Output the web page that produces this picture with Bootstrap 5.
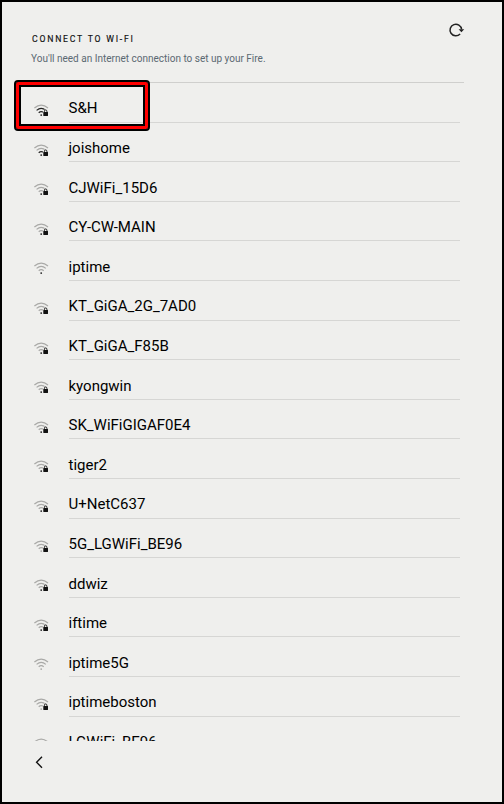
<!DOCTYPE html>
<html lang="en">
<head>
<meta charset="utf-8">
<meta name="viewport" content="width=device-width, initial-scale=1">
<title>Connect to Wi-Fi</title>
<link href="https://cdn.jsdelivr.net/npm/bootstrap@5.3.0/dist/css/bootstrap.min.css" rel="stylesheet">
<style>
body{font-family:Roboto,"Liberation Sans",sans-serif;background:#efefed}
.screen{width:504px;height:804px;border:2px solid #000;background:#efefed}
.head{height:81px;padding-top:20px;margin:0 38px 0 29px;border-bottom:1px solid #cfcfcd}
.title{font-size:8.7px;line-height:12px;letter-spacing:1.77px;color:#111;margin:11px 0 0 1px;-webkit-text-stroke:.15px #111}
.hint{font-size:10px;line-height:14px;color:#5b6972;margin-top:7px}
.networks{height:658px}
.network{height:39.6px;padding-left:32px;margin-right:42px}
.network svg{width:16px;height:14px;margin:21px 18.5px 0 0}
.ssid{border-bottom:1px solid #d6d6d4;font-size:15px;line-height:20px;padding-top:15.4px;color:#000}
.arc{fill:none;stroke:#a9a9a7;stroke-width:1.2}
.arc.on{stroke:#222}
.dot{fill:#a9a9a7}
.dot.on{fill:#222}
.focus-box{left:12px;top:78px;width:136px;height:51px;border:2px solid #000;border-radius:4px;box-shadow:inset 0 0 0 3px #f00,inset 0 0 0 5px #000}
.refresh{width:17px;height:16px;margin-right:-1px}
.back{padding:14px 0 0 32px}
</style>
<script src="https://cdn.jsdelivr.net/npm/bootstrap@5.3.0/dist/js/bootstrap.bundle.min.js"></script>
</head>
<body>
<main class="screen position-relative overflow-hidden">
  <header class="head d-flex justify-content-between align-items-start">
    <div>
      <h1 class="title fw-normal mb-0 text-nowrap">CONNECT TO WI-FI</h1>
      <p class="hint mb-0 text-nowrap">You'll need an Internet connection to set up your Fire.</p>
    </div>
    <svg class="refresh" viewBox="0 0 17 16" aria-label="Refresh"><path d="M12.1 12A5.8 5.8 0 1 1 13.6 7.4" fill="none" stroke="#222" stroke-width="1.5"/><path d="M10.6 7.2H16.2L13.4 10.2Z" fill="#222"/></svg>
  </header>
  <div class="networks overflow-hidden" id="networks"></div>
  <footer class="back"><svg class="d-block" width="10" height="14" viewBox="0 0 10 14" aria-label="Back"><path d="M8 1.8L2.6 7.3L8 12.8" fill="none" stroke="#111" stroke-width="1.4"/></svg></footer>
  <div class="focus-box position-absolute"></div>
</main>
<script>
// [name, signal level 0-3, locked]
const list=[["S&H",3,1],["joishome",2,1],["CJWiFi_15D6",1,1],["CY-CW-MAIN",1,1],["iptime",1,0],["KT_GiGA_2G_7AD0",1,1],["KT_GiGA_F85B",1,1],["kyongwin",1,1],["SK_WiFiGIGAF0E4",1,1],["tiger2",1,1],["U+NetC637",1,1],["5G_LGWiFi_BE96",0,1],["ddwiz",1,1],["iftime",1,1],["iptime5G",0,0],["iptimeboston",0,1],["LGWiFi_BE96",0,1]];
const on=c=>c?" on":"";
document.getElementById("networks").innerHTML=list.map(([name,level,lock])=>`
<div class="network d-flex">
<svg class="flex-shrink-0" viewBox="0 0 16 14"><path class="arc" d="M.4 4Q7.2-1.8 14 4"/><path class="arc${on(level>2)}" d="M2.6 6.4Q7.2 2.3 11.8 6.4"/><path class="arc${on(level>1)}" d="M4.7 8.8Q7.2 6.5 9.7 8.8"/><circle class="dot${on(level>0)}" cx="7.2" cy="11.1" r=".9"/>${lock?'<path d="M9.2 8h.6v-.6a1.7 1.7 0 0 1 3.4 0v.6h.6v4.3H9.2Z" fill="#efefed" stroke="#efefed"/><rect x="9.3" y="7.9" width="4.7" height="4" rx=".3" fill="#111"/><path d="M10.4 8.1V7.2a1.25 1.25 0 0 1 2.5 0v.9" fill="none" stroke="#111" stroke-width=".9"/>':''}</svg>
<div class="ssid flex-grow-1 text-nowrap">${name.replace("&","&amp;")}</div></div>`).join("");
</script>
</body>
</html>
